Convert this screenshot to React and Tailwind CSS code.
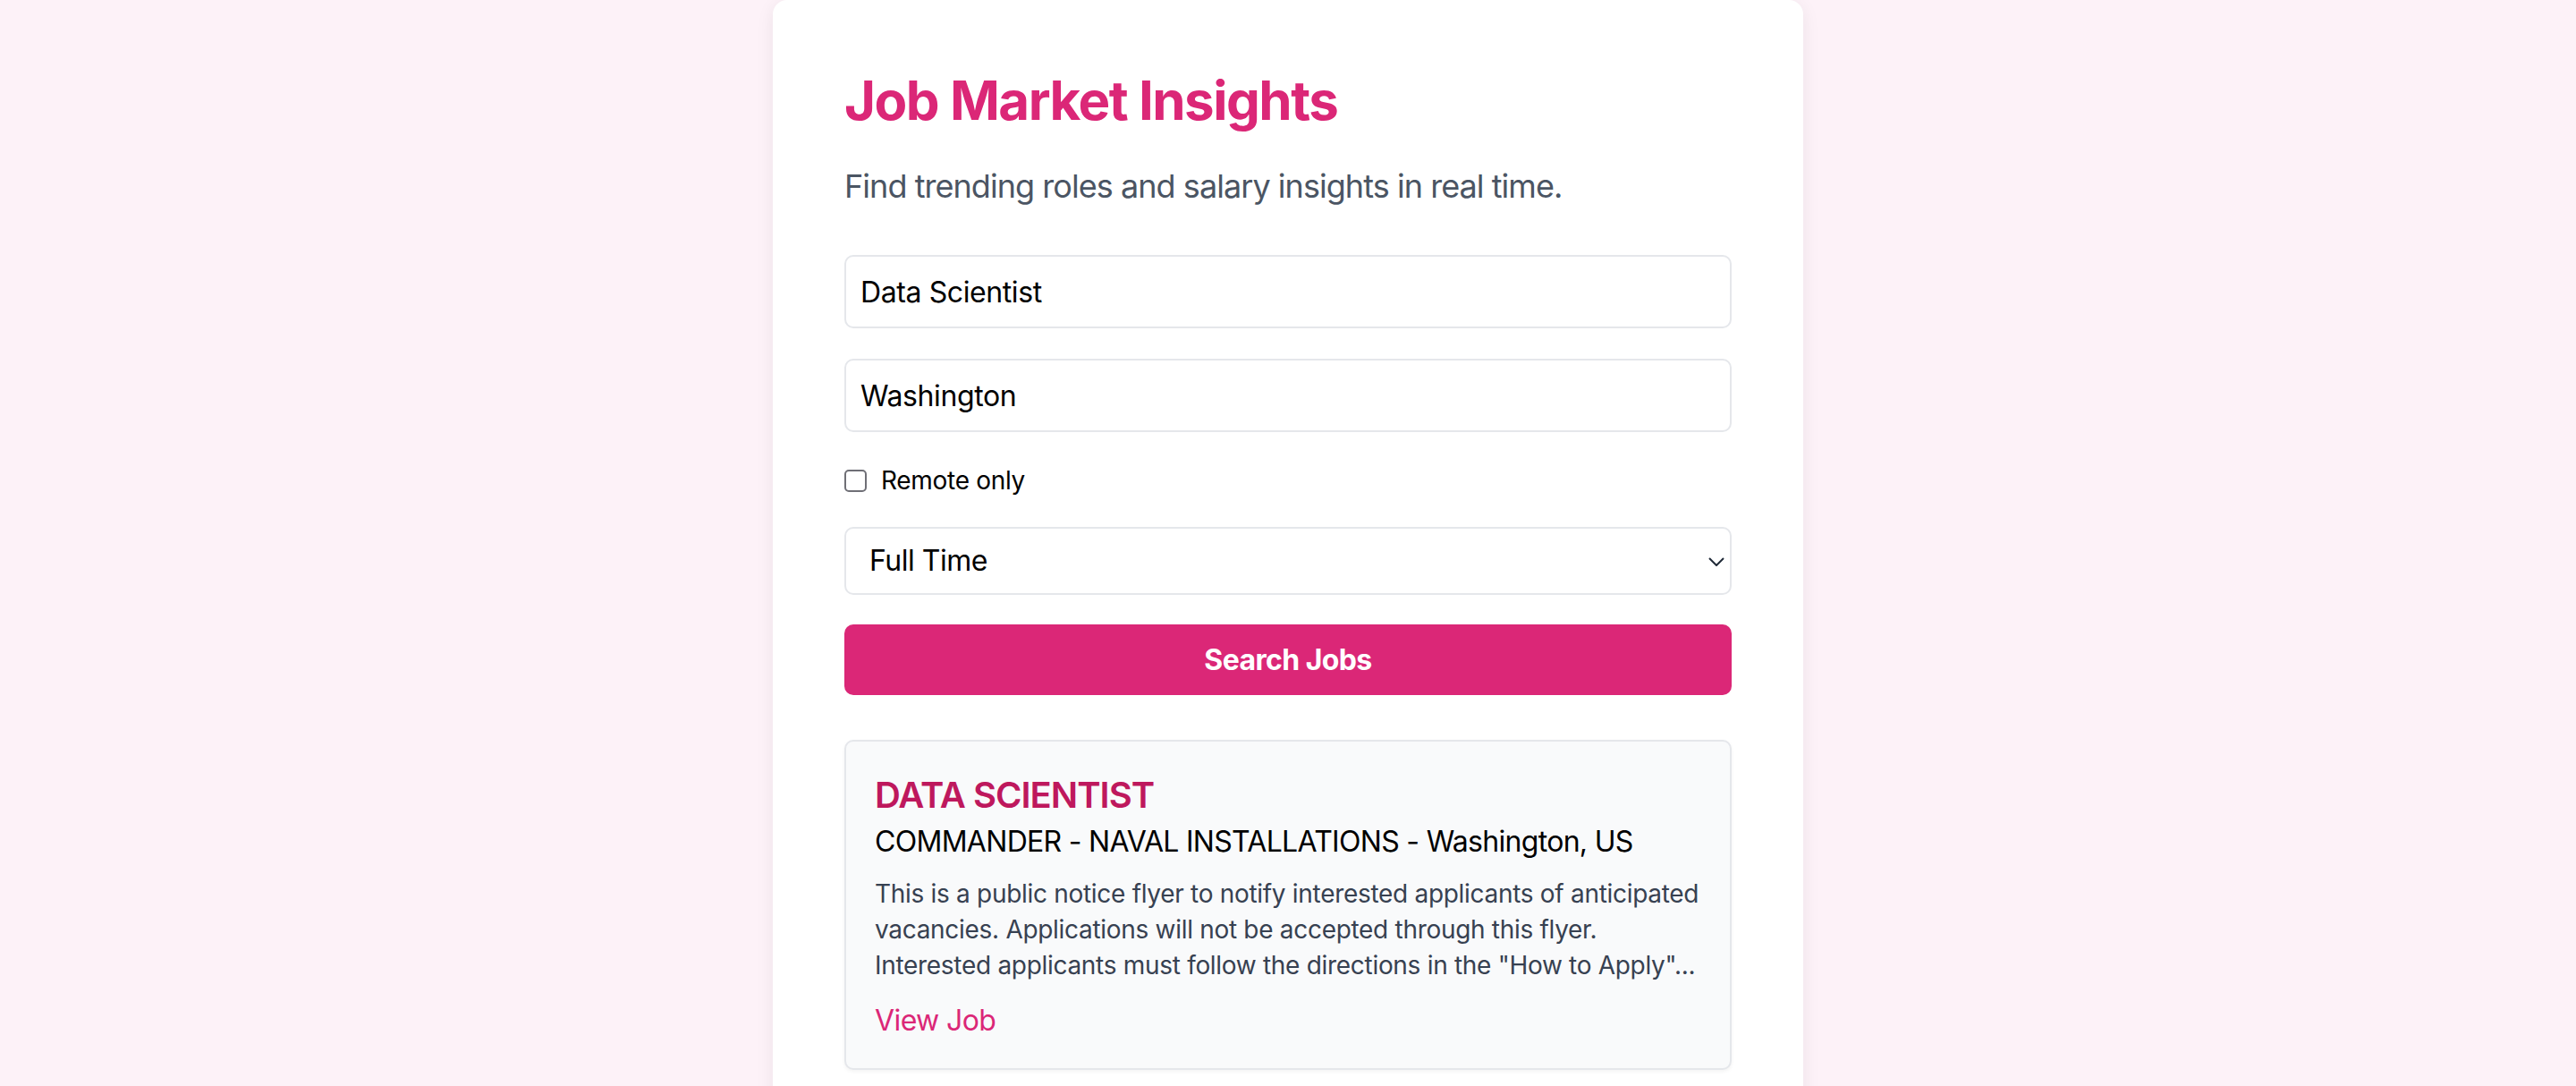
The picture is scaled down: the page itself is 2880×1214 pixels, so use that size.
import React, { useState } from 'react';

const JobCard = ({ job }) => {
    return (
        <div className="mt-[50px] bg-[#f9fafb] border-2 border-[#e5e7eb] rounded-[10px] shadow-[0_2px_4px_rgba(0,0,0,0.05)] px-[32px] pt-[32px] pb-[29px]">
            <h3 className="text-[40px] leading-[56px] font-semibold tracking-[-1px] text-[#be185d]">{job.title}</h3>
            <p className="text-[32px] leading-[48px] tracking-[-0.7px] text-black">
                {job.company} - {job.location}
            </p>
            <p className="mt-[14px] text-[28px] leading-[40px] tracking-[-0.3px] whitespace-nowrap text-[#374151]">
                This is a public notice flyer to notify interested applicants of anticipated
                <br />
                vacancies. Applications will not be accepted through this flyer.
                <br />
                Interested applicants must follow the directions in the "How to Apply"...
            </p>
            <a href="#" className="mt-[18px] block text-[32px] leading-[48px] tracking-[-0.6px] text-[#db2777]">
                View Job
            </a>
        </div>
    );
};

const App = () => {
    const [title, setTitle] = useState('Data Scientist');
    const [location, setLocation] = useState('Washington');
    const [remote, setRemote] = useState(false);
    const [jobType, setJobType] = useState('fulltime');

    const job = {
        title: 'DATA SCIENTIST',
        company: 'COMMANDER - NAVAL INSTALLATIONS',
        location: 'Washington, US',
    };

    return (
        <div className="h-screen overflow-hidden bg-[#fdf2f8] font-['Inter',_'Liberation_Sans',_sans-serif]">
            <div className="mx-auto w-[1152px] bg-white rounded-[16px] shadow-[0_4px_20px_rgba(0,0,0,0.07)] px-[80px] pt-[76px] pb-[80px]">
                <h1 className="text-[60px] leading-[72px] font-bold tracking-[-1.5px] text-[#db2777]">
                    Job Market Insights
                </h1>
                <p className="mt-[32px] text-[36px] leading-[56px] tracking-[-0.95px] text-[#4b5563]">
                    Find trending roles and salary insights in real time.
                </p>

                <div className="mt-[49px] flex flex-col">
                    <input
                        type="text"
                        value={title}
                        onChange={(e) => setTitle(e.target.value)}
                        className="h-[82px] w-full px-[16px] text-[32px] tracking-[-0.4px] text-black bg-white border-2 border-[#e5e7eb] rounded-[10px] outline-none"
                    />
                    <input
                        type="text"
                        value={location}
                        onChange={(e) => setLocation(e.target.value)}
                        className="mt-[34px] h-[82px] w-full px-[16px] text-[32px] tracking-[-0.4px] text-black bg-white border-2 border-[#e5e7eb] rounded-[10px] outline-none"
                    />

                    <label className="mt-[34px] flex items-center h-[40px] text-[28px] leading-[40px] tracking-[-0.3px] text-black">
                        <input
                            type="checkbox"
                            checked={remote}
                            onChange={(e) => setRemote(e.target.checked)}
                            className="appearance-none w-[25px] h-[25px] border-2 border-[#6f6f76] rounded-[5px] bg-white"
                        />
                        <span className="ml-[16px]">Remote only</span>
                    </label>

                    <div className="relative mt-[32px]">
                        <select
                            value={jobType}
                            onChange={(e) => setJobType(e.target.value)}
                            className="appearance-none h-[76px] w-full pl-[26px] pr-[60px] text-[32px] tracking-[-0.5px] text-black bg-white border-2 border-[#e5e7eb] rounded-[10px] outline-none"
                        >
                            <option value="fulltime">Full Time</option>
                            <option value="parttime">Part Time</option>
                            <option value="contract">Contract</option>
                        </select>
                        <svg
                            className="pointer-events-none absolute right-[8px] top-[34px] w-[18px] h-[10px]"
                            viewBox="0 0 18 10"
                            fill="none"
                            stroke="#1f2937"
                            strokeWidth="2"
                        >
                            <path d="M1 1l8 8 8-8" />
                        </svg>
                    </div>

                    <button className="mt-[33px] h-[79px] w-full bg-[#db2777] text-white text-[32px] font-bold tracking-[-0.6px] rounded-[10px]">
                        Search Jobs
                    </button>
                </div>

                <JobCard job={job} />
            </div>
        </div>
    );
};

export default App;
